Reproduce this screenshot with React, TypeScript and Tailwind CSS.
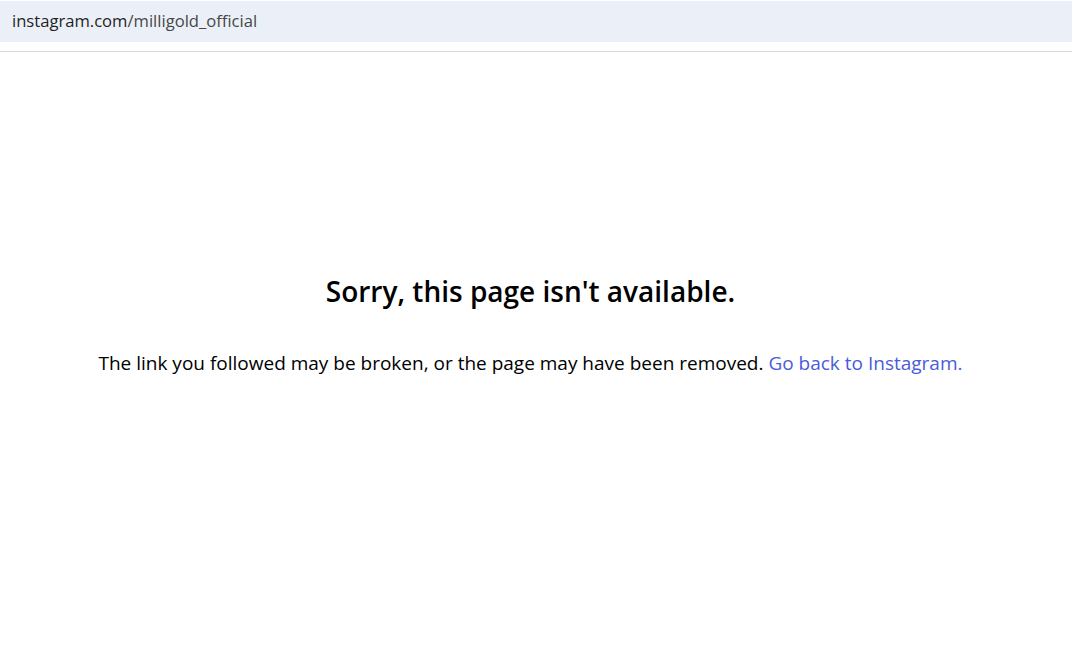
import React from "react";

const App = () => {
  return (
    <div
      className="w-[1074px] h-[651px] bg-white overflow-hidden"
      style={{ fontFamily: '"Open Sans", "Noto Sans", sans-serif' }}
    >
      <div className="pt-px pr-[2px]">
        <div className="h-[41px] bg-[#ebf0f8] flex items-center pl-[12px]">
          <span className="text-[16.6px] text-[#1f1f1f]">
            instagram.com<span className="text-[#474747]">/milligold_official</span>
          </span>
        </div>
        <div className="h-[9px]" />
        <div className="h-px bg-[#dadada]" />
      </div>

      <div className="flex flex-col items-center pt-[222px] pr-[13px]">
        <h2 className="text-[28px] font-semibold text-black leading-[34px]">
          Sorry, this page isn't available.
        </h2>
        <p className="mt-[43px] text-[19px] text-black leading-[24px]">
          The link you followed may be broken, or the page may have been removed.{" "}
          <a href="#" className="text-[#4a5bdb]">
            Go back to Instagram.
          </a>
        </p>
      </div>
    </div>
  );
};

export default App;
